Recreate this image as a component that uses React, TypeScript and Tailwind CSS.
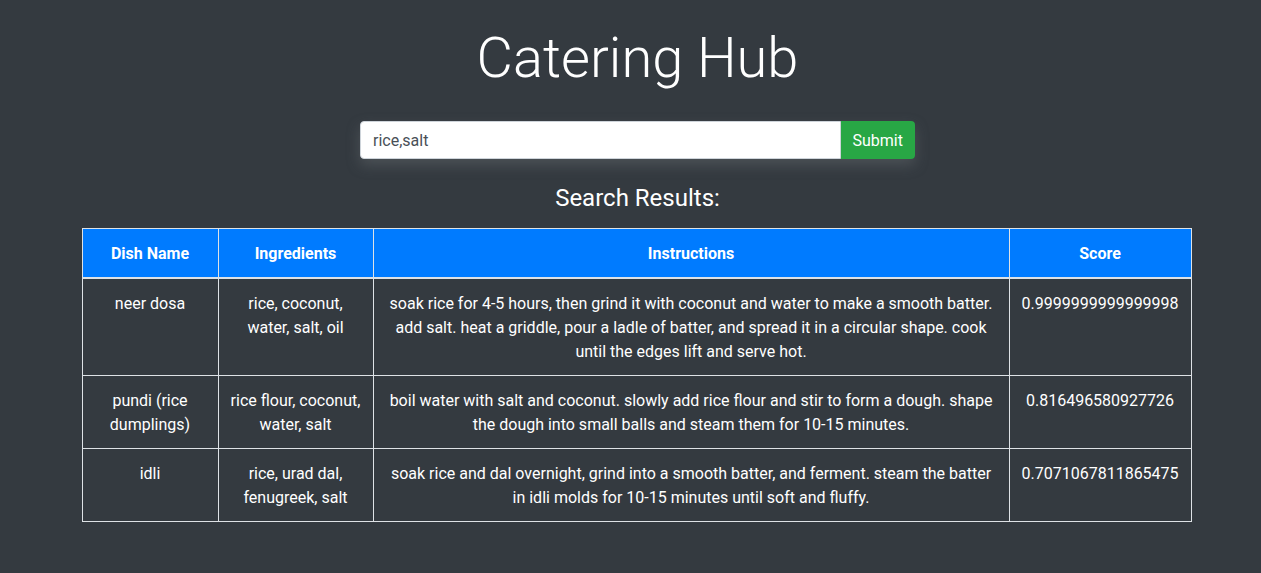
const rows = [
  {
    name: "neer dosa",
    ingredients: "rice, coconut, water, salt, oil",
    instructions:
      "soak rice for 4-5 hours, then grind it with coconut and water to make a smooth batter. add salt. heat a griddle, pour a ladle of batter, and spread it in a circular shape. cook until the edges lift and serve hot.",
    score: "0.9999999999999998",
  },
  {
    name: "pundi (rice dumplings)",
    ingredients: "rice flour, coconut, water, salt",
    instructions:
      "boil water with salt and coconut. slowly add rice flour and stir to form a dough. shape the dough into small balls and steam them for 10-15 minutes.",
    score: "0.816496580927726",
  },
  {
    name: "idli",
    ingredients: "rice, urad dal, fenugreek, salt",
    instructions:
      "soak rice and dal overnight, grind into a smooth batter, and ferment. steam the batter in idli molds for 10-15 minutes until soft and fluffy.",
    score: "0.7071067811865475",
  },
];

export default function App() {
  return (
    <div
      className="min-h-[573px] bg-[#343a40] text-white pl-[14px]"
      style={{ fontFamily: "Roboto, 'Liberation Sans', sans-serif" }}
    >
      <div className="flex flex-col items-center pt-[25px]">
        {/* 제목 */}
        <h1 className="text-[56px] leading-[1.2] font-light text-white">Catering Hub</h1>

        {/* 검색 폼 */}
        <form
          className="mt-[29px] flex w-[555px] h-[38px] rounded-[4px] shadow-[0_6px_14px_rgba(120,125,130,0.35)]"
          onSubmit={(e) => e.preventDefault()}
        >
          <input
            defaultValue="rice,salt"
            className="flex-1 h-full bg-white rounded-l-[4px] border border-[#ced4da] px-3 text-base text-[#495057] outline-none"
          />
          <button
            type="submit"
            className="h-full px-3 pt-[1px] bg-[#28a745] text-white text-base rounded-r-[4px]"
          >
            Submit
          </button>
        </form>

        <h4 className="mt-[25px] text-[24px] leading-[1.2] font-normal">Search Results:</h4>

        {/* 결과 테이블 */}
        <table className="mt-[15px] -ml-[2px] w-[1109px] table-fixed border-collapse text-base leading-6 text-center">
          <colgroup>
            <col className="w-[136px]" />
            <col className="w-[155px]" />
            <col className="w-[636px]" />
            <col className="w-[182px]" />
          </colgroup>
          <thead>
            <tr className="bg-[#007bff]">
              <th className="border border-[#dee2e6] border-b-2 px-3 pt-[13px] pb-[11px] font-bold">Dish Name</th>
              <th className="border border-[#dee2e6] border-b-2 px-3 pt-[13px] pb-[11px] font-bold">Ingredients</th>
              <th className="border border-[#dee2e6] border-b-2 px-3 pt-[13px] pb-[11px] font-bold">Instructions</th>
              <th className="border border-[#dee2e6] border-b-2 px-3 pt-[13px] pb-[11px] font-bold">Score</th>
            </tr>
          </thead>
          <tbody>
            {rows.map((r) => (
              <tr key={r.name}>
                <td className="border border-[#dee2e6] px-3 pt-[13px] pb-[11px] align-top">{r.name}</td>
                <td className="border border-[#dee2e6] px-3 pt-[13px] pb-[11px] align-top">{r.ingredients}</td>
                <td className="border border-[#dee2e6] px-3 pt-[13px] pb-[11px] align-top">{r.instructions}</td>
                <td className="border border-[#dee2e6] px-3 pt-[13px] pb-[11px] align-top">{r.score}</td>
              </tr>
            ))}
          </tbody>
        </table>
      </div>
    </div>
  );
}
